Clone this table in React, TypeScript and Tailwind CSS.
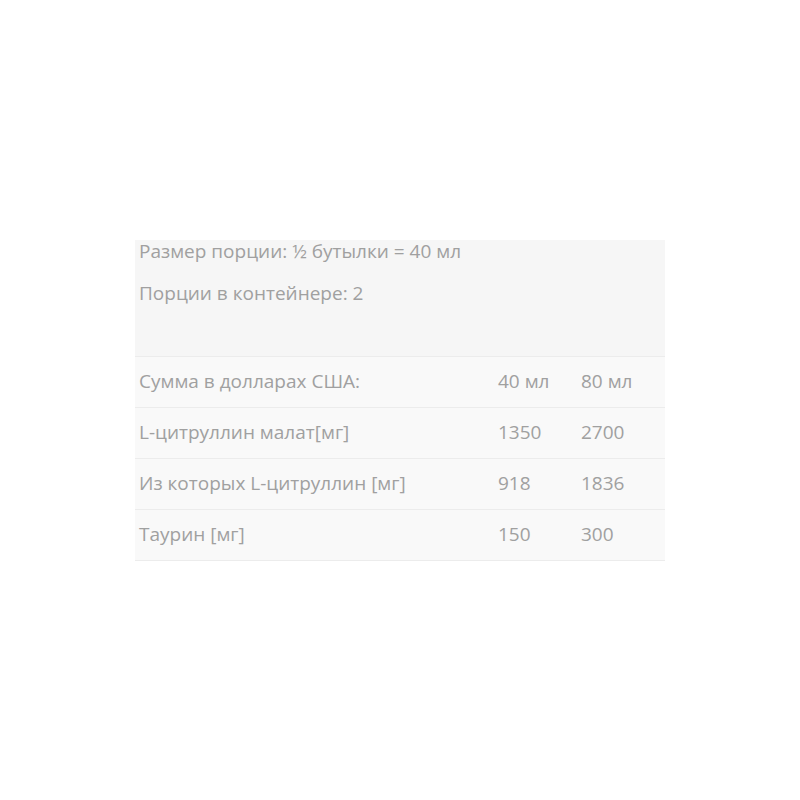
const rows = [
  { name: "Сумма в долларах США:", a: "40 мл", b: "80 мл" },
  { name: "L-цитруллин малат[мг]", a: "1350", b: "2700" },
  { name: "Из которых L-цитруллин [мг]", a: "918", b: "1836" },
  { name: "Таурин [мг]", a: "150", b: "300" },
];

export default function App() {
  return (
    <div className="flex h-[800px] w-[800px] items-center justify-center bg-white font-['Open_Sans',sans-serif] text-[19px] text-[#a0a0a0]">
      <div className="w-[530px] bg-[#f9f9f9]">
        <div className="h-[117px] border-b border-[#ececec] bg-[#f6f6f6] px-1">
          <p className="leading-[22px]">Размер порции: ½ бутылки = 40 мл</p>
          <p className="mt-[20px] leading-[22px]">Порции в контейнере: 2</p>
        </div>
        {rows.map((row) => (
          <div key={row.name} className="grid h-[51px] grid-cols-[359px_83px_1fr] items-center border-b border-[#ececec] px-1">
            <span>{row.name}</span>
            <span>{row.a}</span>
            <span>{row.b}</span>
          </div>
        ))}
      </div>
    </div>
  );
}
